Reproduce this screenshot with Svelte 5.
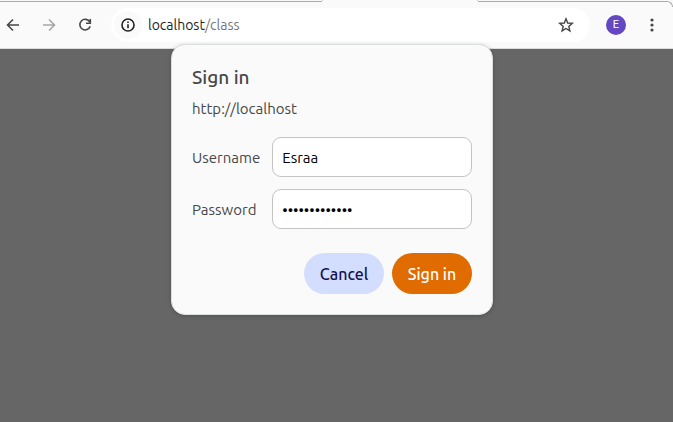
<script>
  let username = $state('Esraa');
  let password = $state('localpassword');
</script>

<div class="browser">
  <header>
    <div class="tabs" aria-hidden="true">
      <span class="tab-edge left"></span>
      <span class="tab-gap"></span>
      <span class="tab-edge right"></span>
      <span class="corner"></span>
    </div>
    <nav class="toolbar">
      <button class="icon" aria-label="Back">
        <svg viewBox="0 0 16 16"><path d="M14 8H3M8 2.5 2.5 8 8 13.5" /></svg>
      </button>
      <button class="icon faded" aria-label="Forward">
        <svg viewBox="0 0 16 16"><path d="M2 8h11M8 2.5 13.5 8 8 13.5" /></svg>
      </button>
      <button class="icon" aria-label="Reload">
        <svg viewBox="0 0 16 16"><path d="M12.6 4.7A5.3 5.3 0 1 0 13.2 9.3M13.3 2v4.3H9" /></svg>
      </button>
      <div class="address">
        <button class="info" aria-label="View site information">
          <svg viewBox="0 0 16 16"><circle cx="8" cy="8" r="6" /><path d="M8 7.3v3.9M8 4.6v1.5" /></svg>
        </button>
        <a class="url" href="http://localhost/class">localhost<span>/class</span></a>
        <button class="star" aria-label="Bookmark this page">
          <svg viewBox="0 0 16 16"><path d="M8 1.8 9.7 6l4.6.4-3.5 3 1.100 4.500L8 11.500l-3.900 2.400 1.100-4.500-3.500-3L6.300 6Z" /></svg>
        </button>
      </div>
      <button class="avatar" aria-label="Profile">E</button>
      <button class="menu" aria-label="Menu">
        <svg viewBox="0 0 16 16"><circle cx="8" cy="3" r="1.6" /><circle cx="8" cy="8" r="1.6" /><circle cx="8" cy="13" r="1.6" /></svg>
      </button>
    </nav>
  </header>

  <main>
    <form class="dialog" onsubmit={(e) => e.preventDefault()}>
      <h1>Sign in</h1>
      <p>http://localhost</p>
      <div class="fields">
        <label for="username">Username</label>
        <input id="username" type="text" bind:value={username} />
        <label for="password">Password</label>
        <input id="password" type="password" bind:value={password} />
      </div>
      <div class="actions">
        <button type="button" class="cancel">Cancel</button>
        <button type="submit" class="submit">Sign in</button>
      </div>
    </form>
  </main>
</div>

<style>
  :global(body) {
    margin: 0;
    background: #666;
  }
  .browser {
    min-height: 100vh;
    display: flex;
    flex-direction: column;
    font-family: Ubuntu, 'Noto Sans', sans-serif;
    font-size: 15px;
    color: #474747;
    background: #666;
  }
  button {
    border: 0;
    padding: 0;
    background: none;
    font: inherit;
    color: inherit;
  }
  header {
    background: #fafafa;
    border-bottom: 1px solid #dcdcdc;
  }
  .tabs {
    display: flex;
    height: 2px;
  }
  .tab-edge {
    box-sizing: border-box;
    border-bottom: 1px solid #a8a8a8;
  }
  .left {
    flex: 323;
    border-bottom-right-radius: 4px 2px;
  }
  .tab-gap {
    flex: 155;
  }
  .right {
    flex: 190;
    border-bottom-left-radius: 4px 2px;
  }
  .corner {
    box-sizing: border-box;
    width: 6px;
    height: 6px;
    margin-top: 1px;
    border: solid #a8a8a8;
    border-width: 1px 1px 0 0;
    border-top-right-radius: 6px;
  }
  .toolbar {
    display: flex;
    align-items: center;
    height: 46px;
    box-sizing: border-box;
    padding: 0 13px 0 5px;
  }
  svg {
    display: block;
    width: 16px;
    height: 16px;
    fill: none;
    stroke: currentColor;
    stroke-width: 1.6;
  }
  .star svg {
    stroke-width: 1.4;
  }
  .icon {
    margin-right: 20px;
  }
  .faded {
    color: #a6a6a6;
  }
  .address {
    flex: 1;
    display: flex;
    align-items: center;
    height: 34px;
    margin-left: -2px;
    padding: 0 16px 0 3px;
    border-radius: 17px;
    background: #fff;
  }
  .info {
    display: grid;
    place-items: center;
    width: 28px;
    height: 28px;
    border-radius: 50%;
    background: #fafafa;
    color: #222;
  }
  .url {
    flex: 1;
    margin-left: 6px;
    font-size: 14px;
    color: #1f1f1f;
    text-decoration: none;
  }
  .url span {
    color: #777;
  }
  .avatar {
    width: 20px;
    height: 20px;
    margin: 0 18px 0 16px;
    border-radius: 50%;
    background: #6547c2;
    color: #fff;
    font: 11px/20px Roboto, sans-serif;
  }
  .menu svg {
    fill: currentColor;
    stroke: none;
  }
  main {
    display: flex;
    justify-content: center;
    align-items: flex-start;
    padding-right: 9px;
  }
  .dialog {
    box-sizing: border-box;
    width: 322px;
    margin-top: -5px;
    padding: 20px;
    border: 1px solid #dcdfdf;
    border-radius: 14px;
    background: #fafafa;
    box-shadow: 0 1px 4px rgba(0, 0, 0, 0.2);
  }
  h1 {
    margin: 0;
    font-size: 19px;
    line-height: 25px;
    font-weight: 500;
    color: #474747;
  }
  p {
    margin: 9px 0 18px;
    line-height: 20px;
  }
  .fields {
    display: grid;
    grid-template-columns: auto 1fr;
    align-items: center;
    gap: 12px;
  }
  input {
    box-sizing: border-box;
    width: 100%;
    min-width: 0;
    height: 40px;
    padding: 0 9px;
    border: 1px solid #c4c4c4;
    border-radius: 9px;
    outline: 0;
    background: #fff;
    color: #000;
    font: inherit;
  }
  .actions {
    display: flex;
    justify-content: flex-end;
    gap: 8px;
    margin-top: 24px;
  }
  .actions button {
    width: 80px;
    height: 41px;
    border-radius: 21px;
    font-size: 16px;
    font-weight: 500;
  }
  .cancel {
    background: #d3deff;
    color: #14104e;
  }
  .submit {
    background: #e06c00;
    color: #fff;
  }
</style>
